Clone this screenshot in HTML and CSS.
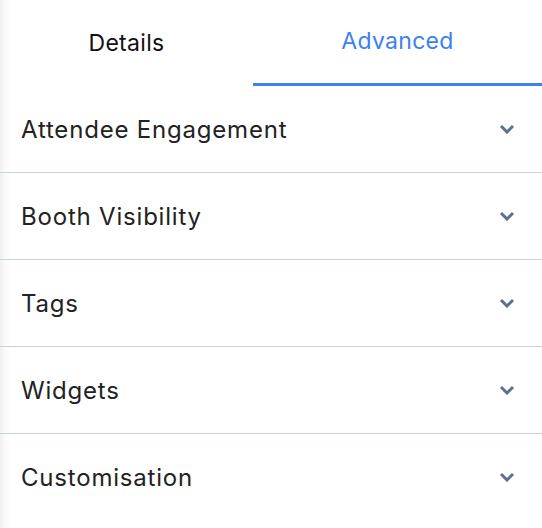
FILE: index.html
```html
<!DOCTYPE html>
<html lang="en">
<head>
  <meta charset="UTF-8">
  <meta name="viewport" content="width=device-width, initial-scale=1.0">
  <title>Booth Settings</title>
  <link rel="stylesheet" href="styles.css">
</head>
<body>
  <div class="panel">
    <div class="tabs">
      <div class="tab">Details</div>
      <div class="tab active">Advanced</div>
    </div>

    <div class="section">
      <span class="section-title">Attendee Engagement</span>
      <svg class="chevron" viewBox="0 0 16 10"><path d="M2 2l6 6 6-6"/></svg>
    </div>
    <div class="section">
      <span class="section-title">Booth Visibility</span>
      <svg class="chevron" viewBox="0 0 16 10"><path d="M2 2l6 6 6-6"/></svg>
    </div>
    <div class="section">
      <span class="section-title">Tags</span>
      <svg class="chevron" viewBox="0 0 16 10"><path d="M2 2l6 6 6-6"/></svg>
    </div>
    <div class="section">
      <span class="section-title">Widgets</span>
      <svg class="chevron" viewBox="0 0 16 10"><path d="M2 2l6 6 6-6"/></svg>
    </div>
    <div class="section last">
      <span class="section-title">Customisation</span>
      <svg class="chevron" viewBox="0 0 16 10"><path d="M2 2l6 6 6-6"/></svg>
    </div>
  </div>
</body>
</html>
```

FILE: styles.css
```css
body {
  margin: 0;
  background-color: #fff;
  font-family: 'Inter', 'Noto Sans', sans-serif;
}

.panel {
  width: 542px;
  height: 528px;
  background: linear-gradient(to right, #f1f1f1 0, #fbfbfb 6px, #fff 12px);
}

.tabs {
  display: grid;
  grid-template-columns: 253px 1fr;
  height: 86px;
}

.tab {
  box-sizing: border-box;
  height: 86px;
  padding-top: 29px;
  text-align: center;
  font-size: 23px;
  line-height: 28px;
  letter-spacing: 0.3px;
  color: #111;
}

.tab.active {
  padding-top: 27px;
  color: #3b82f0;
  border-bottom: 3px solid #3b82f0;
}

.section {
  display: flex;
  align-items: center;
  justify-content: space-between;
  height: 86px;
  padding: 0 27px 0 21px;
  border-bottom: 1px solid #c8d3e0;
}

.section.last {
  border-bottom: none;
}

.section-title {
  font-size: 24px;
  letter-spacing: 0.8px;
  color: #222;
}

.chevron {
  width: 16px;
  height: 10px;
  fill: none;
  stroke: #5b7191;
  stroke-width: 3;
}
```
